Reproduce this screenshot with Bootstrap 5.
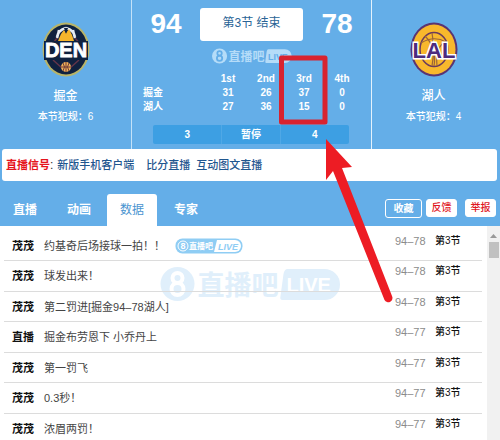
<!DOCTYPE html>
<html lang="zh-CN">
<head>
<meta charset="utf-8">
<meta name="viewport" content="width=device-width, initial-scale=1">
<title>掘金 94-78 湖人</title>
<link href="https://cdn.jsdelivr.net/npm/bootstrap@5.3.0/dist/css/bootstrap.min.css" rel="stylesheet">
<style>
body { font-family: "Liberation Sans", "Noto Sans CJK SC", sans-serif; font-size: 12px; line-height: 14px; background: #fff; }
.sky { background: #64aee8; color: #fff; }
.scoreboard { display: grid; grid-template-columns: 131fr 241fr 128fr; height: 149px; }
.team { padding-top: 22px; }
.team.guest { padding-right: 5px; }
.team svg { width: 48px; height: 55px; }
.team-name { font-size: 12px; margin-top: 12px; font-weight: 500; }
.fouls { font-size: 10px; margin-top: 7px; font-weight: 500; }
.middle { border-left: 1px solid #c4e2f8; border-right: 1px solid #e4f2fc; padding-top: 8px; }
.score { font-size: 28px; line-height: 32px; font-weight: 700; width: 68px; }
.period { flex: 1; background: #fff; color: #2a6496; border-radius: 3px; height: 33px; line-height: 31px; font-size: 12px; }
.wm-small { width: 80px; height: 18px; color: #b5dcf8; --knock: #64aee8; margin-top: 6px; }
.quarters { table-layout: fixed; width: 218px; margin: 7px 0 0 11px; font-size: 10px; line-height: 14px; font-weight: 700; }
.quarters th, .quarters td { padding: 0; text-align: center; }
.quarters th:first-child { width: 66px; text-align: left; }
.timeouts { margin: 11px 22px 0 21px; background: #3d9fe3; border-radius: 2px; line-height: 19px; font-size: 10px; font-weight: 700; }
.timeouts > div { flex: 6; }
.timeouts > div + div { border-left: 1px solid #4fa8e6; }
.timeouts > .t-label { flex: 5; font-size: 10px; }
.signal { margin: 0 3px 0 2px; background: #fff; border-radius: 3px; height: 32px; padding: 0 4px; font-size: 12px; color: #333; }
.signal a { color: #1f568f; text-decoration: none; font-size: 11px; font-weight: 500; margin-right: 6px; }
.signal a.wide { margin-right: 12px; }
.signal strong { color: #e5141c; font-size: 11px; }
.tabs { height: 45px; padding-right: 4px; }
.tabs .tab { border: 0; background: none; color: #fff; font-size: 12px; font-weight: 700; height: 32px; width: 50px; padding: 0; margin-right: 4px; border-radius: 3px 3px 0 0; }
.tabs .tab.active { background: #fff; color: #4a94d0; font-weight: 400; margin-left: -1px; }
.tool { border: 1px solid #fff; border-radius: 3px; background: #fff; color: #e0161e; font-size: 10px; line-height: 12px; font-weight: 500; padding: 0; height: 18px; width: 31px; margin-bottom: 9px; }
.tool.save { background: none; color: #fff; width: 37px; height: 19px; margin-right: -4px; font-weight: 700; margin-bottom: 8px; }
.feed-item { margin: 0 5px 0 4px; border-bottom: 1px solid #dcdcdc; height: 30px; padding: 0 21px 0 8px; color: #444; }
.feed li:nth-child(even) { height: 31px; }
.feed li:first-child { height: 35px; padding-top: 5px; }
.who { color: #111; font-size: 11px; width: 32px; }
.what { font-size: 11px; }
.result { color: #8b8b8b; font-size: 11px; width: 40px; padding-bottom: 10px; }
.when { color: #111; font-size: 10px; width: 26px; padding-bottom: 10px; font-weight: 500; }
.badge-live { width: 68px; height: 16px; margin-left: 10px; }
.track { width: 13px; background: #f1f1f1; padding-top: 8px; }
.track svg { width: 7px; height: 4px; }
.thumb { width: 10px; height: 16px; background: #c1c1c1; margin-top: 4px; }
.wm-large { position: absolute; left: 50%; top: 38px; margin-left: -90px; width: 181px; height: 40px; color: #e0effb; --knock: #fff; z-index: -1; }
.pointer { position: absolute; left: 50%; top: 50px; margin-left: 25px; width: 125px; height: 260px; pointer-events: none; }
svg text { font-family: "Liberation Sans", "Noto Sans CJK SC", sans-serif; font-weight: 700; }
</style>
<script src="https://cdn.jsdelivr.net/npm/bootstrap@5.3.0/dist/js/bootstrap.bundle.min.js"></script>
</head>
<body>
<svg width="0" height="0" class="position-absolute" aria-hidden="true">
  <symbol id="brand" viewBox="0 0 180 40">
    <circle cx="17" cy="20" r="17" fill="currentColor"/>
    <g fill="none" stroke="var(--knock)" stroke-width="4"><circle cx="17" cy="14" r="5"/><circle cx="17" cy="25" r="6"/></g>
    <text x="37" y="31" font-size="27" fill="currentColor">直播吧</text>
    <path d="M127 5h37a15 15 0 0 1 0 31h-42q-3 0-2-4l3-22q1-5 4-5z" fill="currentColor"/>
    <text x="126" y="28" font-size="20" fill="var(--knock)">LIVE</text>
  </symbol>
</svg>
<main class="d-flex flex-column vh-100 position-relative overflow-hidden">
  <header class="sky">
    <div class="scoreboard">
      <section class="team text-center">
        <svg class="d-block mx-auto" viewBox="0 0 48 55" role="img" aria-label="掘金">
          <ellipse cx="24" cy="27.500" rx="23.500" ry="27" fill="#b8b468"/>
          <ellipse cx="24" cy="27.500" rx="21.500" ry="25" fill="#10213f"/>
          <path d="M15 16 9 24M33 16l7 8M11 38l9 8M37 38l-9 8" stroke="#633449" stroke-width="1.500"/>
          <path d="M17 8q-1 5-2 8M31 8q1 5 2 8M15 15q1-7 9-9M33 15q-1-7-9-9" fill="none" stroke="#e8edf4" stroke-width="2.500"/>
          <path d="M16 19 19 12l3-4 2 3 3-4 3 6 2 6z" fill="#f6b52b"/>
          <path d="m22 6 2 6 2-6z" fill="#10213f"/>
          <rect x="2" y="19" width="44" height="19" fill="#10213f"/>
          <text x="24" y="35" font-size="20" text-anchor="middle" fill="#fff" stroke="#fff" stroke-width=".8">DEN</text>
          <circle cx="24" cy="45" r="5" fill="#f0b25a"/><path d="M24 40v10M19 45h10M21 41q3 4 0 8M27 41q-3 4 0 8" fill="none" stroke="#6c3a38" stroke-width="1"/>
        </svg>
        <div class="team-name">掘金</div>
        <div class="fouls">本节犯规：6</div>
      </section>
      <section class="middle">
        <div class="d-flex text-center">
          <div class="score">94</div>
          <div class="period">第3节 结束</div>
          <div class="score">78</div>
        </div>
        <svg class="wm-small d-block mx-auto" aria-hidden="true"><use href="#brand"/></svg>
        <table class="quarters">
          <thead><tr><th></th><th>1st</th><th>2nd</th><th>3rd</th><th>4th</th></tr></thead>
          <tbody>
            <tr><th>掘金</th><td>31</td><td>26</td><td>37</td><td>0</td></tr>
            <tr><th>湖人</th><td>27</td><td>36</td><td>15</td><td>0</td></tr>
          </tbody>
        </table>
        <div class="timeouts d-flex text-center"><div>3</div><div class="t-label">暂停</div><div>4</div></div>
      </section>
      <section class="team guest text-center">
        <svg class="d-block mx-auto" viewBox="0 0 48 55" role="img" aria-label="湖人">
          <ellipse cx="24" cy="27.500" rx="23.500" ry="27" fill="#5a3472"/>
          <ellipse cx="24" cy="27.500" rx="21.500" ry="25" fill="#f8b82c"/>
          <ellipse cx="24" cy="27.500" rx="14" ry="17" fill="#f8b82c" stroke="#6b3b5d" stroke-width="1.500"/>
          <path d="M22 11q3 16 0 33M11 21q13-8 25-1M12 36q13-8 24 2M15 14q12 12 9 30M36 19Q25 25 27 44" fill="none" stroke="#9b6438" stroke-width="1.200"/>
          <text x="24" y="36" font-size="22" text-anchor="middle" fill="#4d2c7e" stroke="#fff" stroke-width="3" paint-order="stroke">LAL</text>
        </svg>
        <div class="team-name">湖人</div>
        <div class="fouls">本节犯规：4</div>
      </section>
    </div>
    <div class="signal d-flex align-items-center">
      <strong>直播信号</strong><span class="me-1">:</span>
      <a href="#" class="wide">新版手机客户端</a><a href="#">比分直播</a><a href="#">互动图文直播</a>
    </div>
    <nav class="tabs d-flex align-items-end">
      <button class="tab" type="button">直播</button>
      <button class="tab" type="button">动画</button>
      <button class="tab active" type="button">数据</button>
      <button class="tab" type="button">专家</button>
      <div class="ms-auto d-flex align-items-end gap-2">
        <button class="tool save" type="button">收藏</button>
        <button class="tool" type="button">反馈</button>
        <button class="tool" type="button">举报</button>
      </div>
    </nav>
  </header>
  <div class="d-flex flex-grow-1 overflow-hidden position-relative z-0">
    <svg class="wm-large" aria-hidden="true"><use href="#brand"/></svg>
    <ul class="feed list-unstyled mb-0 flex-grow-1">
      <li class="feed-item d-flex align-items-center"><strong class="who">茂茂</strong><span class="what">约基奇后场接球一拍！！</span>
        <svg class="badge-live" viewBox="0 0 68 16" aria-hidden="true">
          <rect x=".5" y=".5" width="67" height="15" rx="7" fill="#8fcdf4"/>
          <path d="M42 2h18a6 6 0 0 1 0 12H39z" fill="#fff"/>
          <circle cx="8" cy="8" r="5" fill="none" stroke="#fff"/>
          <text x="8" y="11" font-size="9" text-anchor="middle" fill="#fff">8</text>
          <text x="14" y="11" font-size="8" fill="#fff">直播吧</text>
          <text x="43" y="12" font-size="9" font-style="italic" fill="#8fcdf4">LIVE</text>
        </svg>
        <span class="result ms-auto">94–78</span><span class="when">第3节</span></li>
      <li class="feed-item d-flex align-items-center"><strong class="who">茂茂</strong><span class="what">球发出来！</span><span class="result ms-auto">94–78</span><span class="when">第3节</span></li>
      <li class="feed-item d-flex align-items-center"><strong class="who">茂茂</strong><span class="what">第二罚进[掘金94–78湖人]</span><span class="result ms-auto">94–78</span><span class="when">第3节</span></li>
      <li class="feed-item d-flex align-items-center"><strong class="who">直播</strong><span class="what">掘金布劳恩下 小乔丹上</span><span class="result ms-auto">94–77</span><span class="when">第3节</span></li>
      <li class="feed-item d-flex align-items-center"><strong class="who">茂茂</strong><span class="what">第一罚飞</span><span class="result ms-auto">94–77</span><span class="when">第3节</span></li>
      <li class="feed-item d-flex align-items-center"><strong class="who">茂茂</strong><span class="what">0.3秒！</span><span class="result ms-auto">94–77</span><span class="when">第3节</span></li>
      <li class="feed-item d-flex align-items-center"><strong class="who">茂茂</strong><span class="what">浓眉两罚！</span><span class="result ms-auto">94–77</span><span class="when">第3节</span></li>
    </ul>
    <div class="track d-flex flex-column align-items-center" aria-hidden="true">
      <svg viewBox="0 0 7 4"><path d="M0 4 3.500 0 7 4z" fill="#999"/></svg>
      <div class="thumb"></div>
    </div>
  </div>
  <svg class="pointer" viewBox="275 50 125 260" aria-hidden="true">
    <rect x="281.500" y="58" width="43.500" height="64" fill="none" stroke="#d8232f" stroke-width="5" stroke-linejoin="round"/>
    <path d="M326 139 352 167 342 168 392 296A4 4 0 0 1 384.500 300L333 171 326 180z" fill="#ed1c24"/>
  </svg>
</main>
</body>
</html>
